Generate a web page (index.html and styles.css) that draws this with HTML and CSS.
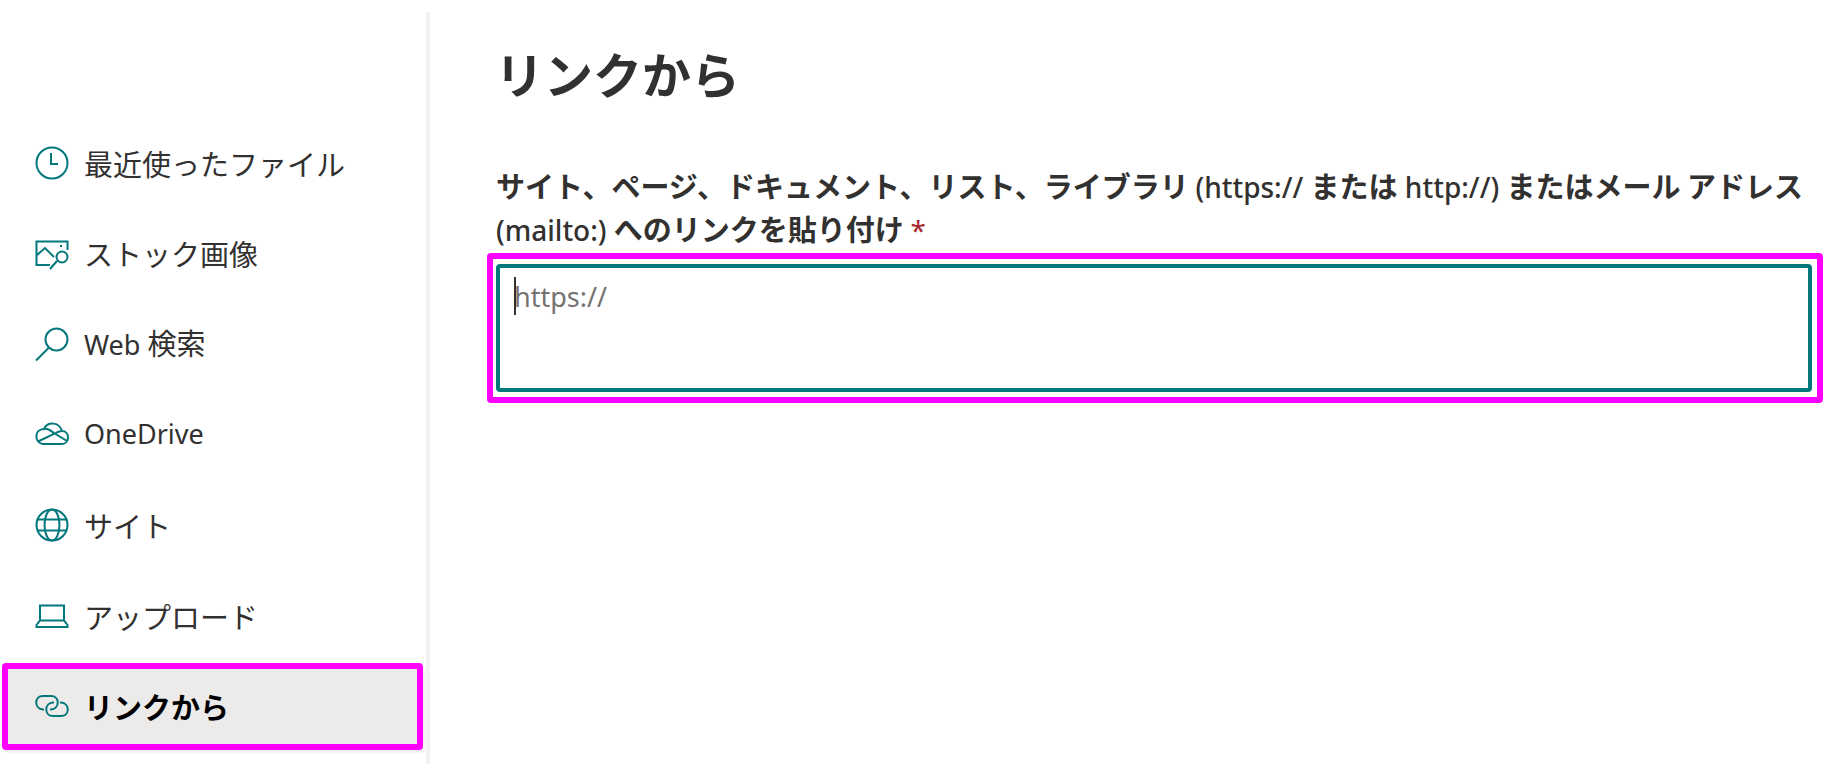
FILE: index.html
```
<!DOCTYPE html>
<html lang="ja">
<head>
    <meta charset="UTF-8">
    <meta name="viewport" content="width=device-width, initial-scale=1">
    <title>リンクから</title>
    <link rel="stylesheet" href="styles.css">
</head>
<body>
<div class="picker">
    <nav class="sidebar">
        <ul class="menu">
            <li><a class="menu-item" href="#recent">
                <svg class="icon" viewBox="0 0 34 34"><circle cx="17" cy="17" r="15.5"/><path d="M16 7v11h7"/></svg>
                <span>最近使ったファイル</span>
            </a></li>
            <li><a class="menu-item" href="#stock">
                <svg class="icon" viewBox="0 0 34 34"><path d="M32.5 14V5.5H1.5V29H15M2 19l8-7 9 9M15 33l7-8"/><circle cx="27" cy="21" r="5.5"/><path d="M25 10h2"/></svg>
                <span>ストック画像</span>
            </a></li>
            <li><a class="menu-item" href="#web">
                <svg class="icon" viewBox="0 0 34 34"><circle cx="21.5" cy="12.5" r="11"/><path d="M14 20.5L1 33.5"/></svg>
                <span><span class="latin">Web </span>検索</span>
            </a></li>
            <li><a class="menu-item" href="#onedrive">
                <svg class="icon" viewBox="0 0 34 34"><path d="M8 27C-1 26-1 12 9 12C12 5 24 4 27 14C35 14 35 27 27 27ZM9 12C13 11 16 14 19 16L32 24M3 24.5L19 17C22 15 24 14 27 14"/></svg>
                <span class="latin">OneDrive</span>
            </a></li>
            <li><a class="menu-item" href="#site">
                <svg class="icon" viewBox="0 0 34 34"><circle cx="17" cy="17" r="15.5"/><ellipse cx="17" cy="17" rx="7.5" ry="15.5"/><path d="M3 11.5h28M3 22.5h28"/></svg>
                <span>サイト</span>
            </a></li>
            <li><a class="menu-item" href="#upload">
                <svg class="icon" viewBox="0 0 34 34"><path d="M5 22V6.5H29V22M5 21.5H29L32.5 26V28H1.5V26Z"/></svg>
                <span>アップロード</span>
            </a></li>
            <li><a class="menu-item selected" href="#link" aria-current="page">
                <svg class="icon" viewBox="0 0 34 34"><path d="M9 20.5H8C-1 20-1 7 8 7H16C25 7 25 20 16 20.5H15M25 13.5H26C35 14 35 27 26 27H18C9 27 9 14 18 13.5H19"/></svg>
                <span>リンクから</span>
            </a></li>
        </ul>
    </nav>

    <main class="content">
        <h1>リンクから</h1>
        <label for="linkUrl">サイト、ページ、ドキュメント、リスト、ライブラリ <span class="latin">(https:// </span>または<span class="latin"> http://) </span>またはメール アドレス <span class="latin">(mailto:) </span>へのリンクを貼り付け <span class="latin required">*</span></label>
        <div class="field">
            <textarea id="linkUrl" placeholder="https://" required></textarea>
            <span class="caret"></span>
        </div>
    </main>
</div>
</body>
</html>
```
FILE: styles.css
```
* {
    box-sizing: border-box;
}

body {
    margin: 0;
    background: #fff;
    color: #323130;
    font-family: "Noto Sans CJK JP", sans-serif;
    font-size: 29px;
}

.picker {
    display: flex;
    min-height: 100vh;
    padding-top: 12px;
}

.sidebar {
    flex: none;
    width: 430px;
    padding: 107px 3px 0 2px;
    border-right: 4px solid #f3f2f1;
}

.menu {
    display: flex;
    flex-direction: column;
    justify-content: space-between;
    min-height: 631px;
    margin: 0;
    padding: 0;
    list-style: none;
}

.menu-item {
    display: flex;
    align-items: center;
    gap: 15px;
    height: 87px;
    padding: 0 27px;
    border: 6px solid transparent;
    border-radius: 4px;
    color: inherit;
    font-weight: 400;
    line-height: 40px;
    text-decoration: none;
    white-space: nowrap;
}

.menu-item.selected {
    border-color: #f0f;
    background: #edebe9;
    box-shadow: 2px 3px 2px rgba(0, 0, 0, 0.06);
    color: #000;
    font-weight: 700;
}

.icon {
    flex: none;
    width: 34px;
    height: 34px;
    fill: none;
    stroke: #03787c;
    stroke-width: 2;
}

.latin {
    font-family: "Noto Sans", sans-serif;
    font-size: 27px;
    font-weight: 400;
}

.content {
    flex: 1;
    min-width: 0;
    padding: 26px 5px 28px 57px;
}

h1 {
    margin: 0 0 56px;
    padding-left: 8px;
    font-size: 49px;
    font-weight: 700;
    line-height: 70px;
}

label {
    display: block;
    margin-bottom: 3px;
    padding-left: 9px;
    font-weight: 700;
    line-height: 43px;
}

label .latin {
    font-size: 28px;
    font-weight: 500;
    line-height: 28px;
}

label .required {
    color: #a4262c;
    font-weight: 400;
}

.field {
    position: relative;
    padding: 5px 5px 5px 3px;
    border: 6px solid #f0f;
    border-radius: 4px;
}

textarea {
    display: block;
    width: 100%;
    height: 128px;
    padding: 9px 14px;
    border: 4px solid #03787c;
    border-radius: 4px;
    outline: none;
    background: #fff;
    color: #323130;
    font-family: "Noto Sans", "Noto Sans CJK JP", sans-serif;
    font-size: 27px;
    line-height: 40px;
    resize: none;
}

textarea::placeholder {
    color: #757371;
    opacity: 1;
}

.caret {
    position: absolute;
    top: 18px;
    left: 21px;
    width: 2px;
    height: 38px;
    background: #323130;
}
```
